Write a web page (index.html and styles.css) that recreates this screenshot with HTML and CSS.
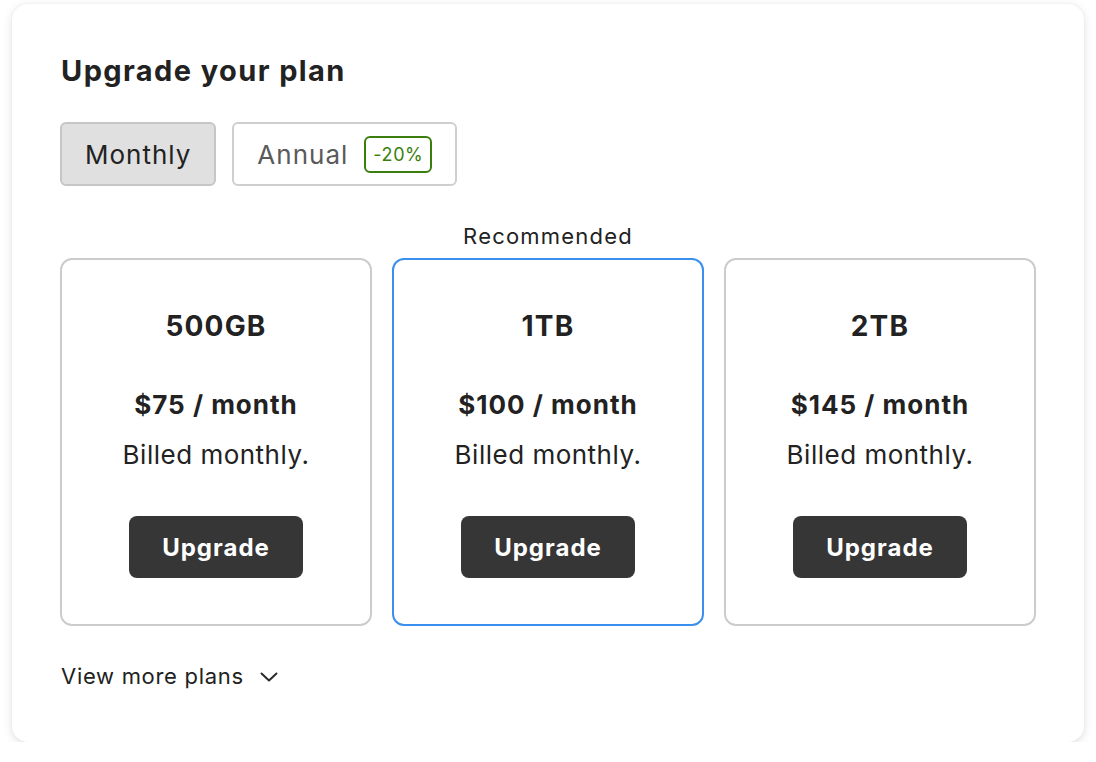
FILE: index.html
```html
<!DOCTYPE html>
<html lang="en">
<head>
<meta charset="utf-8">
<title>Upgrade your plan</title>
<link rel="stylesheet" href="styles.css">
</head>
<body>
<section class="panel">
  <h1 class="title">Upgrade your plan</h1>
  <div class="toggle">
    <button class="seg seg-active">Monthly</button>
    <button class="seg">Annual <span class="badge">-20%</span></button>
  </div>
  <div class="plans">
    <div class="label"></div>
    <div class="label">Recommended</div>
    <div class="label"></div>
    <div class="plan">
      <div class="plan-name">500GB</div>
      <div class="plan-price">$75 / month</div>
      <div class="plan-note">Billed monthly.</div>
      <button class="upgrade">Upgrade</button>
    </div>
    <div class="plan plan-rec">
      <div class="plan-name">1TB</div>
      <div class="plan-price">$100 / month</div>
      <div class="plan-note">Billed monthly.</div>
      <button class="upgrade">Upgrade</button>
    </div>
    <div class="plan">
      <div class="plan-name">2TB</div>
      <div class="plan-price">$145 / month</div>
      <div class="plan-note">Billed monthly.</div>
      <button class="upgrade">Upgrade</button>
    </div>
  </div>
  <div class="more">
    <span>View more plans</span>
    <svg class="chev" width="18" height="10" viewBox="0 0 18 10" fill="none"><path d="M1.5 1.5 L9 8.5 L16.5 1.5" stroke="#2a2a2a" stroke-width="2" stroke-linecap="round" stroke-linejoin="round"/></svg>
  </div>
</section>
</body>
</html>
```

FILE: styles.css
```css
* { box-sizing: border-box; }
html, body { margin: 0; padding: 0; background: #ffffff; }
body {
  font-family: Inter, "Noto Sans", "Liberation Sans", sans-serif;
  color: #222222;
  padding: 4px 12px 0 12px;
}
.panel {
  width: 1072px;
  height: 738px;
  background: #ffffff;
  border-radius: 16px;
  box-shadow: 0 2px 10px rgba(0, 0, 0, 0.13), 0 0 2px rgba(0,0,0,0.05);
  padding: 49px 48px 0 48px;
}
.title {
  margin: 0 0 33px 1px;
  font-size: 29px;
  line-height: 36px;
  font-weight: 700;
  letter-spacing: 1.4px;
  color: #222222;
}
.toggle {
  display: flex;
  gap: 16px;
}
.seg {
  height: 64px;
  padding: 0 23px;
  border: 2px solid #cfcfcf;
  border-radius: 6px;
  background: #ffffff;
  font-family: inherit;
  font-size: 26px;
  letter-spacing: 1px;
  color: #5a5a5a;
  display: flex;
  align-items: center;
  gap: 16px;
}
.seg-active {
  background: #e0e0e0;
  color: #222222;
  border-color: #c6c6c6;
}
.badge {
  display: inline-flex;
  align-items: center;
  height: 37px;
  padding: 0 7px;
  border: 2px solid #3a7f0d;
  border-radius: 6px;
  color: #3a7f0d;
  font-size: 18px;
  letter-spacing: 0.6px;
}
.plans {
  margin-top: 36px;
  display: grid;
  grid-template-columns: repeat(3, 312px);
  column-gap: 20px;
  row-gap: 8px;
}
.label {
  text-align: center;
  font-size: 22px;
  line-height: 28px;
  letter-spacing: 1.2px;
  color: #222222;
}
.plan {
  height: 368px;
  border: 2px solid #cccccc;
  border-radius: 12px;
  padding-top: 48px;
  display: flex;
  flex-direction: column;
  align-items: center;
}
.plan-rec { border-color: #3a8fef; }
.plan-name {
  font-size: 28px;
  line-height: 36px;
  font-weight: 700;
  letter-spacing: 1.2px;
}
.plan-price {
  margin-top: 44px;
  font-size: 26px;
  line-height: 34px;
  font-weight: 700;
  letter-spacing: 1px;
}
.plan-note {
  margin-top: 16px;
  font-size: 26px;
  line-height: 34px;
  letter-spacing: 0.5px;
}
.upgrade {
  margin-top: 44px;
  width: 174px;
  height: 62px;
  border: 0;
  border-radius: 8px;
  background: #363636;
  color: #ffffff;
  font-family: inherit;
  font-size: 24px;
  font-weight: 700;
  letter-spacing: 1px;
}
.more {
  margin-top: 35px;
  display: flex;
  align-items: center;
  gap: 16px;
  font-size: 22px;
  line-height: 30px;
  letter-spacing: 0.7px;
  color: #222222;
  padding-left: 1px;
}
.chev { display: block; margin-top: 1px; }
```
